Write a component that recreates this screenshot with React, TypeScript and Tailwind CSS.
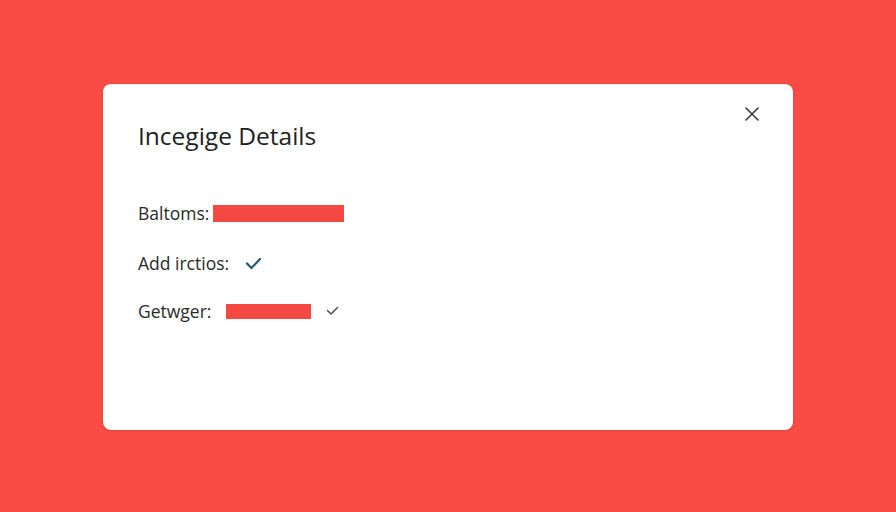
import React from "react";

export default function App() {
  return (
    <div className="w-[896px] h-[512px] bg-[#fa4b45] flex items-start justify-center pt-[84px]" style={{ fontFamily: '"Open Sans", "Noto Sans", sans-serif' }}>
      <div className="relative w-[690px] h-[346px] bg-white rounded-[8px] shadow-sm pl-[35px] pt-[34px]">
        <button className="absolute right-[33px] top-[22px] text-[#3a3a3a]">
          <svg width="16" height="16" viewBox="0 0 16 16" fill="none" stroke="currentColor" strokeWidth="1.6" strokeLinecap="round">
            <path d="M2 2L14 14M14 2L2 14" />
          </svg>
        </button>
        <h2 className="text-[24.5px] leading-[36px] text-[#222] font-normal">Incegige Details</h2>
        <div className="mt-[47px] flex flex-col gap-[26px] text-[17.5px] text-[#2a2a2a]">
          <div className="flex items-center h-[24px]">
            <span>Baltoms:</span>
            <span className="ml-[4px] w-[131px] h-[17px] bg-[#f44842]" />
          </div>
          <div className="flex items-center h-[24px]">
            <span>Add irctios:</span>
            <svg className="ml-[16px]" width="17" height="13" viewBox="0 0 17 13" fill="none" stroke="#1f5b78" strokeWidth="2.2" strokeLinecap="round" strokeLinejoin="round">
              <path d="M2 6.5L6.5 11L15 2" />
            </svg>
          </div>
          <div className="flex items-center h-[24px] mt-[-2px]">
            <span>Getwger:</span>
            <span className="ml-[15px] w-[85px] h-[15px] bg-[#f44842]" />
            <svg className="ml-[15px]" width="13" height="10" viewBox="0 0 13 10" fill="none" stroke="#555" strokeWidth="1.6" strokeLinecap="round" strokeLinejoin="round">
              <path d="M1.5 4.5L5 8L11.5 1.5" />
            </svg>
          </div>
        </div>
      </div>
    </div>
  );
}
